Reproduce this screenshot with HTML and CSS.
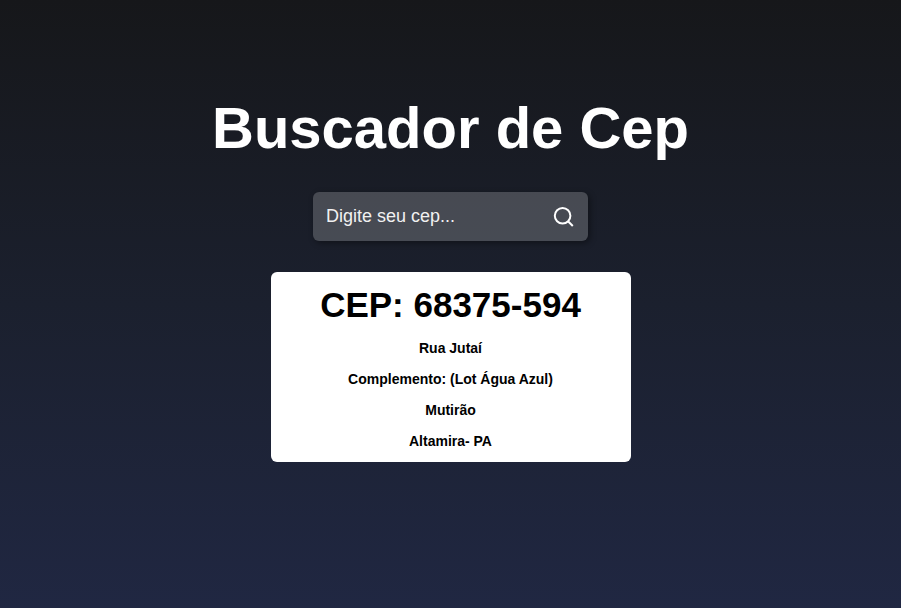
FILE: index.html
```html
<!DOCTYPE html>
<html lang="pt-BR">
<head>
<meta charset="utf-8">
<meta name="viewport" content="width=device-width, initial-scale=1">
<title>Buscador de Cep</title>
<link rel="stylesheet" href="styles.css">
</head>
<body>
<div class="container">
  <h1 class="title">Buscador de Cep</h1>
  <form class="search">
    <input class="search-input" type="text" placeholder="Digite seu cep..." aria-label="Digite seu cep">
    <button class="search-button" type="button" aria-label="Buscar">
      <svg class="search-icon" viewBox="0 0 24 24" aria-hidden="true"><circle cx="10.6" cy="10.8" r="7.8"/><path d="M16 16.2l4.8 4.8"/></svg>
    </button>
  </form>
  <main class="result">
    <h2 class="result-title">CEP: 68375-594</h2>
    <span>Rua Jutaí</span>
    <span>Complemento: (Lot Água Azul)</span>
    <span>Mutirão</span>
    <span>Altamira- PA</span>
  </main>
</div>
</body>
</html>
```

FILE: styles.css
```css
* {
  margin: 0;
  padding: 0;
  box-sizing: border-box;
}

body {
  font-family: "Liberation Sans", Arial, sans-serif;
}

.container {
  min-height: 100vh;
  padding: 94px 16px 16px;
  display: flex;
  flex-direction: column;
  align-items: center;
  background: linear-gradient(180deg, #16171a, #1b202e 50%, #202742);
}

.title {
  color: #fff;
  font-size: 58px;
  line-height: 68px;
}

.search {
  display: flex;
  align-items: center;
  margin: 30px 0 31px;
  padding: 8px;
  border-radius: 6px;
  background: rgba(255, 255, 255, 0.2);
  box-shadow: 2px 2px 6px rgba(0, 0, 0, 0.4);
}

.search-input {
  width: 227px;
  height: 33px;
  padding-left: 5px;
  border: 0;
  outline: none;
  background: transparent;
  color: #fff;
  font: 18px "Liberation Sans", Arial, sans-serif;
}

.search-input::placeholder {
  color: #f1f1f1;
}

.search-button {
  display: flex;
  padding: 4px;
  border: 0;
  background: transparent;
  cursor: pointer;
}

.search-icon {
  width: 24px;
  height: 24px;
  fill: none;
  stroke: #fff;
  stroke-width: 2;
}

.result {
  width: 360px;
  max-width: 100%;
  padding: 13px 16px;
  display: flex;
  flex-direction: column;
  align-items: center;
  gap: 15px;
  border-radius: 6px;
  background: #fff;
  color: #000;
  font-size: 14px;
  font-weight: bold;
  line-height: 16px;
  text-align: center;
}

.result-title {
  font-size: 35px;
  line-height: 40px;
}
```
